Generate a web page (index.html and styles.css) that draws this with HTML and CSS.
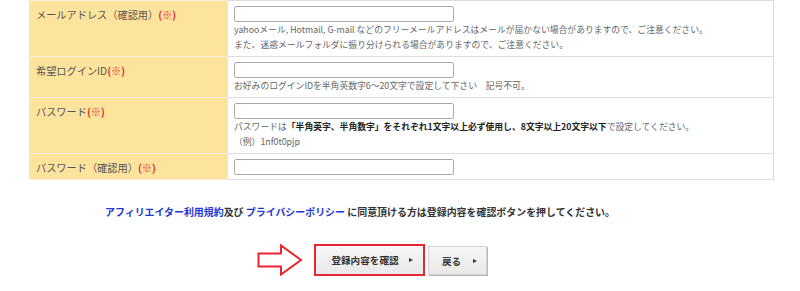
FILE: index.html
```html
<!DOCTYPE html>
<html lang="ja">
<head>
    <meta charset="UTF-8">
    <meta name="viewport" content="width=device-width, initial-scale=1.0">
    <title>会員登録</title>
    <link rel="stylesheet" href="styles.css">
</head>
<body>
    <div class="container">
        <table class="form-table">
            <tr>
                <th>メールアドレス（確認用）<span class="req">(※)</span></th>
                <td>
                    <input type="text" class="field">
                    <p class="note">yahooメール, Hotmail, G-mail などのフリーメールアドレスはメールが届かない場合がありますので、ご注意ください。</p>
                    <p class="note">また、迷惑メールフォルダに振り分けられる場合がありますので、ご注意ください。</p>
                </td>
            </tr>
            <tr>
                <th>希望ログインID<span class="req">(※)</span></th>
                <td>
                    <input type="text" class="field">
                    <p class="note">お好みのログインIDを半角英数字6～20文字で設定して下さい　記号不可。</p>
                </td>
            </tr>
            <tr>
                <th>パスワード<span class="req">(※)</span></th>
                <td>
                    <input type="password" class="field">
                    <p class="note">パスワードは<strong>「半角英字、半角数字」をそれぞれ1文字以上必ず使用し、8文字以上20文字以下</strong>で設定してください。</p>
                    <p class="note">（例）1nf0t0pjp</p>
                </td>
            </tr>
            <tr>
                <th>パスワード（確認用）<span class="req">(※)</span></th>
                <td>
                    <input type="password" class="field">
                </td>
            </tr>
        </table>

        <p class="agree"><a href="#">アフィリエイター利用規約</a>及び <a href="#">プライバシーポリシー</a> に同意頂ける方は登録内容を確認ボタンを押してください。</p>

        <div class="actions">
            <div class="confirm-wrap">
                <svg class="pointer" width="46" height="32" viewBox="0 0 46 32">
                    <path d="M1.5 9.5 H24 V1.5 L44 16 L24 30.5 V22.5 H1.5 Z" fill="#fff" stroke="#e8262d" stroke-width="2" stroke-linejoin="miter"/>
                </svg>
                <button class="btn btn-confirm">登録内容を確認</button>
            </div>
            <button class="btn btn-back">戻る</button>
        </div>
    </div>
</body>
</html>
```

FILE: styles.css
```css
body {
    margin: 0;
    font-family: "Noto Sans CJK JP", "Noto Sans", sans-serif;
    color: #555;
    background: #fff;
}
.container {
    width: 800px;
}
.form-table {
    width: 745px;
    margin-left: 29px;
    border-collapse: collapse;
    table-layout: fixed;
}
.form-table th {
    box-sizing: border-box;
    width: 199px;
    background: #fde49d;
    border-top: 1px solid #fff4d6;
    border-bottom: 1px solid #fff4d6;
    padding: 6px 7px 0;
    text-align: left;
    vertical-align: top;
    font-weight: normal;
    font-size: 10.2px;
    line-height: 15px;
    color: #555;
}
.form-table td {
    border: 1px solid #ddd;
    border-left: none;
    padding: 5px 6px 4px;
    vertical-align: top;
}
.req {
    color: #e8262d;
    font-weight: bold;
}
.field {
    display: block;
    box-sizing: border-box;
    width: 220px;
    height: 16px;
    margin: 0;
    padding: 0 3px;
    border: 1px solid #aaa;
    border-radius: 2px;
    background: #fff;
}
.note {
    margin: 0;
    font-size: 8.8px;
    line-height: 15px;
    color: #666;
    white-space: nowrap;
}
.note strong {
    color: #222;
}
.agree {
    margin: 24px 0 0;
    padding-right: 80px;
    text-align: center;
    font-size: 9.95px;
    line-height: 16px;
    font-weight: bold;
    color: #333;
}
.agree a {
    color: #2236d6;
    text-decoration: none;
}
.actions {
    display: flex;
    justify-content: center;
    align-items: flex-start;
    gap: 3px;
    margin-top: 24px;
}
.confirm-wrap {
    position: relative;
}
.pointer {
    position: absolute;
    left: -57px;
    top: 0;
}
.btn {
    display: flex;
    align-items: center;
    justify-content: center;
    gap: 10px;
    font-family: inherit;
    font-weight: bold;
    font-size: 9.6px;
    color: #333;
    cursor: pointer;
    background: linear-gradient(#f6f6f6, #e9e9e9);
}
.btn::after {
    content: "";
    border-left: 4px solid #333;
    border-top: 2.5px solid transparent;
    border-bottom: 2.5px solid transparent;
}
.btn-confirm {
    width: 111px;
    height: 32px;
    border: 2px solid #e8262d;
    padding: 0 0 0 6px;
}
.btn-back {
    width: 59px;
    height: 29px;
    margin-top: 2px;
    border: 1px solid #d4d4d4;
    box-shadow: 1px 1px 0 #b5b5b5;
    padding: 0 0 0 5px;
    gap: 12px;
}
```
